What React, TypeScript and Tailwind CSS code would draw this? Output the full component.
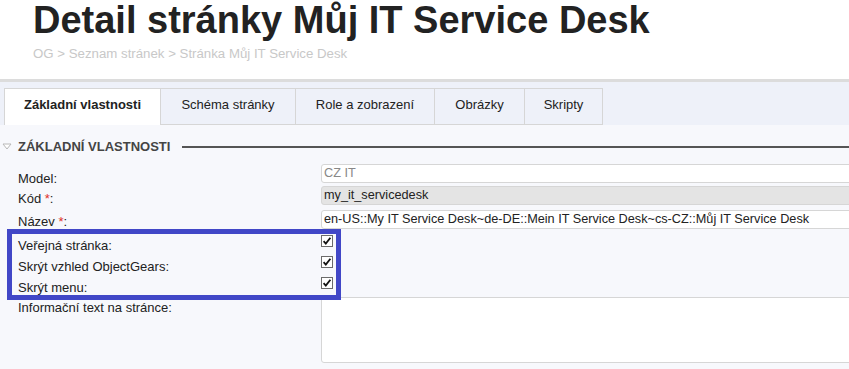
import React from 'react';

const tabs = [
  { label: 'Základní vlastnosti', width: 'w-[157px]', active: true },
  { label: 'Schéma stránky', width: 'w-[135px]' },
  { label: 'Role a zobrazení', width: 'w-[139px]' },
  { label: 'Obrázky', width: 'w-[90px]' },
  { label: 'Skripty', width: 'w-[78px]' },
];

const Req = () => <span className="text-[#e0302a]"> *</span>;

const Check = () => (
  <svg width="12" height="12" viewBox="0 0 12 12" className="block">
    <rect x="0.5" y="0.5" width="11" height="11" fill="#fff" stroke="#6b6b6b" />
    <path d="M2.6 6.2 L4.8 8.6 L9.4 2.8" fill="none" stroke="#111" strokeWidth="1.8" />
  </svg>
);

const Row = ({
  label,
  h,
  pt,
  children,
}: {
  label: React.ReactNode;
  h: string;
  pt: string;
  children: React.ReactNode;
}) => (
  <div className={`flex items-start ${h}`}>
    <div className={`w-[321px] shrink-0 pl-[18px] ${pt} text-[13px] leading-[15px] text-[#222]`}>{label}</div>
    <div className="flex-1">{children}</div>
  </div>
);

const inputBase =
  'h-[19px] w-[600px] border border-[#d6d6d6] rounded-[3px] px-[2px] text-[12.7px] leading-[17px] whitespace-nowrap';

export default function App() {
  return (
    <div className="relative w-[849px] h-[369px] overflow-hidden bg-[#f7f8fc] font-['Liberation_Sans',Arial,sans-serif]">
      {/* page header */}
      <header className="bg-white h-[79px] pl-[33px]">
        <h1 className="text-[38px] leading-[40px] font-bold text-[#222] whitespace-nowrap">
          Detail stránky Můj IT Service Desk
        </h1>
        <div className="mt-[6px] text-[13.25px] leading-[15px] text-[#c8c8c8]">
          OG &gt; Seznam stránek &gt; Stránka Můj IT Service Desk
        </div>
      </header>
      <div className="h-[3px] bg-[#dcdcdc]" />

      {/* tabs */}
      <nav className="h-[43px] bg-[#eef1f9] pt-[6px] pl-[4px] flex">
        {tabs.map((t) => (
          <div
            key={t.label}
            className={`${t.width} h-[37px] border-t border-r border-[#d6d6d6] first:border-l text-center pt-[8px] text-[13px] leading-[15px] text-[#222] ${
              t.active ? 'bg-white font-bold' : 'bg-[#eef1f9] border-b'
            }`}
          >
            {t.label}
          </div>
        ))}
      </nav>

      {/* section header */}
      <div className="mt-[14px] flex items-center h-[15px]">
        <svg width="10" height="7" viewBox="0 0 10 7" className="ml-[2px] mr-[6px]">
          <path d="M1 1 H9 L5 6 Z" fill="#fff" stroke="#b8b8b8" />
        </svg>
        <span className="text-[13px] leading-[15px] font-bold text-[#444] whitespace-nowrap">ZÁKLADNÍ VLASTNOSTI</span>
        <div className="ml-[12px] flex-1 h-[2px] bg-[#555]" />
      </div>

      {/* form */}
      <div className="mt-[10px]">
        <Row label="Model:" h="h-[22px]" pt="pt-[7px]">
          <div className={`${inputBase} bg-white text-[#888]`}>CZ IT</div>
        </Row>
        <Row label={<>Kód<Req />:</>} h="h-[24px]" pt="pt-[5px]">
          <div className={`${inputBase} bg-[#e4e4e4] text-[#222]`}>my_it_servicedesk</div>
        </Row>
        <Row label={<>Název<Req />:</>} h="h-[25px]" pt="pt-[4px]">
          <div className={`${inputBase} bg-white text-[#222]`}>
            en-US::My IT Service Desk~de-DE::Mein IT Service Desk~cs-CZ::Můj IT Service Desk
          </div>
        </Row>
        <Row label="Veřejná stránka:" h="h-[21px]" pt="pt-[3px]">
          <Check />
        </Row>
        <Row label="Skrýt vzhled ObjectGears:" h="h-[21px]" pt="pt-[3px]">
          <Check />
        </Row>
        <Row label="Skrýt menu:" h="h-[20px]" pt="pt-[3px]">
          <Check />
        </Row>
        <Row label="Informační text na stránce:" h="h-[66px]" pt="pt-[3px]">
          <div className="h-[66px] w-[600px] border border-[#d6d6d6] rounded-[3px] bg-white" />
        </Row>
      </div>

      {/* highlight annotation */}
      <div className="absolute left-[7px] top-[229px] w-[334px] h-[71px] border-[5px] border-[#4147c7]" />
    </div>
  );
}
